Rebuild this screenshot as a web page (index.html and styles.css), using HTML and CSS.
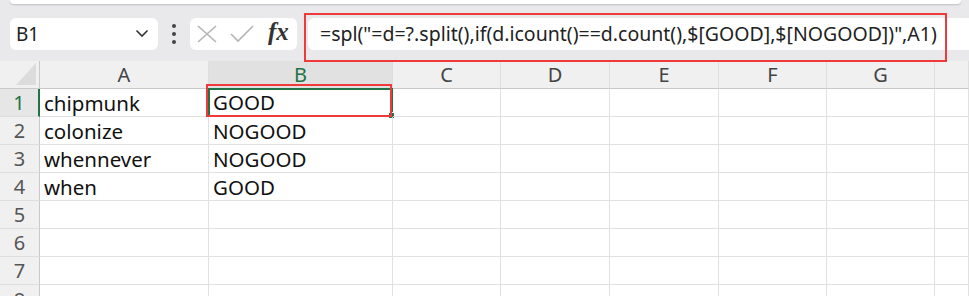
FILE: index.html
```html
<!DOCTYPE html>
<html lang="en">
<head>
    <meta charset="UTF-8">
    <title>Sheet</title>
    <link rel="stylesheet" href="styles.css">
</head>
<body>
    <div class="ribbon"></div>

    <div class="toolbar">
        <div class="name-box">
            <span>B1</span>
            <svg class="chevron" width="14" height="9" viewBox="0 0 14 9"><path d="M1.5 1.5 L7 7 L12.5 1.5" fill="none" stroke="#333" stroke-width="1.6"/></svg>
        </div>
        <div class="dots">
            <i></i><i></i><i></i>
        </div>
        <div class="fx-buttons">
            <svg width="20" height="18" viewBox="0 0 20 18"><path d="M1 1 L19 17 M19 1 L1 17" stroke="#b4b4b4" stroke-width="1.6" fill="none"/></svg>
            <svg width="24" height="18" viewBox="0 0 24 18"><path d="M1 9 L8 16 L23 1" stroke="#b4b4b4" stroke-width="1.6" fill="none"/></svg>
            <span class="fx">fx</span>
        </div>
        <div class="formula-box">=spl("=d=?.split(),if(d.icount()==d.count(),$[GOOD],$[NOGOOD])",A1)</div>
        <div class="mark mark-formula"></div>
    </div>

    <div class="sheet">
        <div class="grid">
            <div class="corner"><span class="tri"></span></div>
            <div class="col-head">A</div>
            <div class="col-head active">B</div>
            <div class="col-head">C</div>
            <div class="col-head">D</div>
            <div class="col-head">E</div>
            <div class="col-head">F</div>
            <div class="col-head">G</div>
            <div class="col-head"></div>

            <div class="row-head active">1</div>
            <div class="cell">chipmunk</div>
            <div class="cell selected">GOOD<span class="handle"></span></div>
            <div class="cell"></div><div class="cell"></div><div class="cell"></div><div class="cell"></div><div class="cell"></div><div class="cell"></div>

            <div class="row-head">2</div>
            <div class="cell">colonize</div>
            <div class="cell">NOGOOD</div>
            <div class="cell"></div><div class="cell"></div><div class="cell"></div><div class="cell"></div><div class="cell"></div><div class="cell"></div>

            <div class="row-head">3</div>
            <div class="cell">whennever</div>
            <div class="cell">NOGOOD</div>
            <div class="cell"></div><div class="cell"></div><div class="cell"></div><div class="cell"></div><div class="cell"></div><div class="cell"></div>

            <div class="row-head">4</div>
            <div class="cell">when</div>
            <div class="cell">GOOD</div>
            <div class="cell"></div><div class="cell"></div><div class="cell"></div><div class="cell"></div><div class="cell"></div><div class="cell"></div>

            <div class="row-head">5</div>
            <div class="cell"></div><div class="cell"></div><div class="cell"></div><div class="cell"></div><div class="cell"></div><div class="cell"></div><div class="cell"></div><div class="cell"></div>

            <div class="row-head">6</div>
            <div class="cell"></div><div class="cell"></div><div class="cell"></div><div class="cell"></div><div class="cell"></div><div class="cell"></div><div class="cell"></div><div class="cell"></div>

            <div class="row-head">7</div>
            <div class="cell"></div><div class="cell"></div><div class="cell"></div><div class="cell"></div><div class="cell"></div><div class="cell"></div><div class="cell"></div><div class="cell"></div>

            <div class="row-head last">8</div>
            <div class="cell"></div><div class="cell"></div><div class="cell"></div><div class="cell"></div><div class="cell"></div><div class="cell"></div><div class="cell"></div><div class="cell"></div>
        </div>
        <div class="mark mark-cell"></div>
    </div>
</body>
</html>
```

FILE: styles.css
```css
/* spreadsheet screenshot */
body {
    margin: 0;
    width: 969px;
    height: 296px;
    overflow: hidden;
    background-color: #e9e9eb;
    font-family: "Noto Sans", "Liberation Sans", sans-serif;
}

.ribbon {
    height: 4px;
    margin: 0 8px 0 10px;
    background-color: #fff;
    border-radius: 0 0 8px 8px;
    box-shadow: 0 1px 2px rgba(0, 0, 0, 0.18);
}

.toolbar {
    position: relative;
    display: flex;
    align-items: center;
    height: 57px;
    padding: 2px 0 0 10px;
    box-sizing: border-box;
}

.name-box {
    display: flex;
    align-items: center;
    justify-content: space-between;
    width: 148px;
    height: 32px;
    padding: 0 9px 0 6px;
    box-sizing: border-box;
    background-color: #fff;
    border-radius: 6px;
    font-size: 19px;
    color: #222;
}

.dots {
    width: 32px;
    display: flex;
    flex-direction: column;
    align-items: center;
    gap: 4px;
}

.dots i {
    width: 4px;
    height: 4px;
    border-radius: 50%;
    background-color: #444;
}

.fx-buttons {
    display: flex;
    align-items: center;
    gap: 13px;
    width: 107px;
    height: 32px;
    padding-left: 7px;
    box-sizing: border-box;
    background-color: #fff;
    border-radius: 6px;
}

.fx {
    font-family: "Liberation Serif", serif;
    font-style: italic;
    font-weight: bold;
    font-size: 25px;
    color: #333;
    margin-left: 1px;
    margin-top: -3px;
}

.formula-box {
    flex: 1;
    height: 32px;
    margin-left: 11px;
    padding-left: 12px;
    line-height: 32px;
    background-color: #fff;
    border-radius: 6px 0 0 6px;
    font-size: 19.5px;
    color: #222;
    white-space: nowrap;
}

/* red annotation boxes */
.mark {
    position: absolute;
    border: 2px solid #ee3a3a;
    box-sizing: border-box;
    z-index: 5;
}

.mark-formula {
    left: 304px;
    top: 9px;
    width: 643px;
    height: 49px;
}

.sheet {
    position: relative;
}

.mark-cell {
    left: 206px;
    top: 23px;
    width: 186px;
    height: 33px;
}

.grid {
    display: grid;
    grid-template-columns: 40px 169px 184px 108px 109px 109px 108px 108px 34px;
    grid-auto-rows: 28px;
    background-color: #fff;
}

.grid > div {
    box-sizing: border-box;
    position: relative;
}

.corner {
    background-color: #f0f0f0;
    border-right: 1px solid #c9c9c9;
    border-bottom: 1px solid #c9c9c9;
}

.tri {
    position: absolute;
    right: 3px;
    bottom: 3px;
    width: 0;
    height: 0;
    border-left: 20px solid transparent;
    border-bottom: 22px solid #dcdcdc;
}

.col-head {
    background-color: #f0f0f0;
    border-right: 1px solid #dedede;
    border-bottom: 1px solid #c9c9c9;
    text-align: center;
    font-size: 20px;
    line-height: 28px;
    color: #444;
}

.col-head.active {
    background-color: #e1e1e1;
    color: #217346;
}

.row-head {
    background-color: #f0f0f0;
    border-right: 1px solid #c9c9c9;
    border-bottom: 1px solid #dedede;
    text-align: center;
    font-size: 20px;
    line-height: 28px;
    color: #555;
}

.row-head.last {
    line-height: 30px;
}

.row-head.active {
    background-color: #e6e6e6;
    border-right: 2px solid #217346;
    color: #217346;
}

.cell {
    border-right: 1px solid #e1e1e1;
    border-bottom: 1px solid #e1e1e1;
    padding-left: 4px;
    font-size: 20.5px;
    line-height: 28px;
    color: #111;
    white-space: nowrap;
}

.cell.selected {
    border: 2px solid #217346;
    padding-left: 3px;
    line-height: 25px;
    margin-top: -1px;
    margin-left: -1px;
    height: 29px;
}

.handle {
    position: absolute;
    right: -4px;
    bottom: -4px;
    width: 5px;
    height: 5px;
    background-color: #217346;
    border: 1px solid #fff;
}
```
